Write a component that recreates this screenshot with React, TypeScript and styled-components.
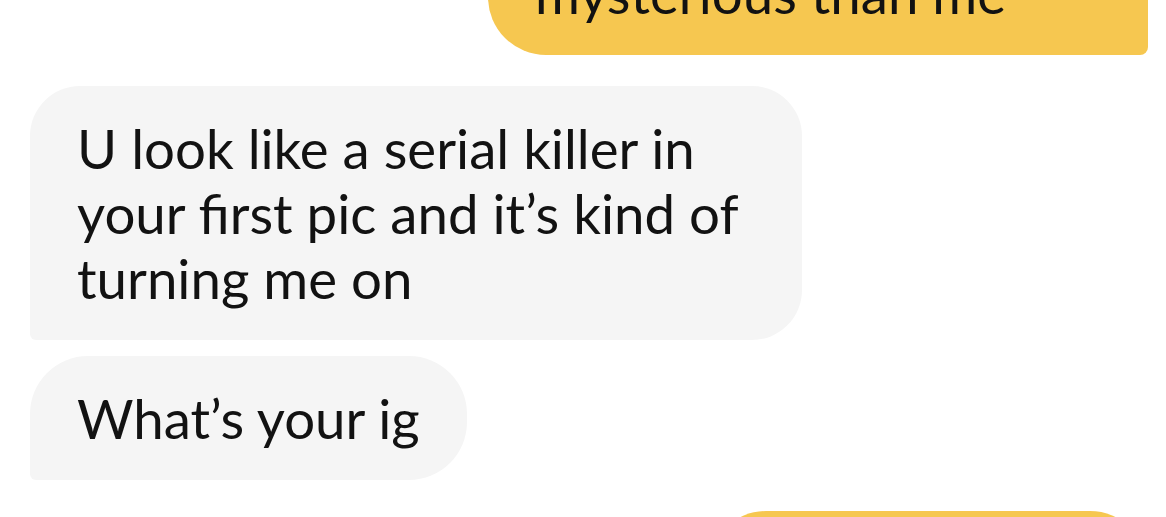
import React from 'react';
import styled, { createGlobalStyle, css } from 'styled-components';

const GlobalStyle = createGlobalStyle`
  html, body {
    margin: 0;
    background: #ffffff;
    overflow: hidden;
  }
  body {
    font-family: 'Lato', 'Liberation Sans', sans-serif;
    -webkit-font-smoothing: antialiased;
  }
`;

const Thread = styled.div`
  display: flex;
  flex-direction: column;
  padding: 0 18px 0 30px;
  margin-top: -69px;
`;

const Group = styled.div<{ $mine?: boolean }>`
  display: flex;
  flex-direction: column;
  align-items: ${(p) => (p.$mine ? 'flex-end' : 'flex-start')};
  gap: 16px;
  & + & {
    margin-top: 31px;
  }
`;

const Bubble = styled.div<{ $mine?: boolean; $pill?: boolean; $width?: number; $height?: number }>`
  box-sizing: border-box;
  padding: 30px 47px 29px;
  font-size: 54.6px;
  line-height: 65px;
  color: #121212;
  ${(p) => p.$width && `width: ${p.$width}px;`}
  ${(p) => p.$height && `height: ${p.$height}px;`}
  ${(p) =>
    p.$mine
      ? css`
          background: #f6c750;
          border-radius: 58px 58px 8px 58px;
        `
      : css`
          background: #f5f5f5;
          border-radius: ${p.$pill ? '58px 58px 58px 6px' : '50px 50px 50px 6px'};
        `}
`;

const Line = styled.span`
  display: block;
  white-space: nowrap;
`;

export default function App() {
  return (
    <>
      <GlobalStyle />
      <Thread>
        <Group $mine>
          <Bubble $mine $width={660}>
            <Line>mysterious than me</Line>
          </Bubble>
        </Group>
        <Group>
          <Bubble $width={772}>
            <Line>U look like a serial killer in</Line>
            <Line>your first pic and it’s kind of</Line>
            <Line>turning me on</Line>
          </Bubble>
          <Bubble $pill>
            <Line>What’s your ig</Line>
          </Bubble>
        </Group>
        <Group $mine>
          <Bubble $mine $width={440} $height={124} />
        </Group>
      </Thread>
    </>
  );
}
